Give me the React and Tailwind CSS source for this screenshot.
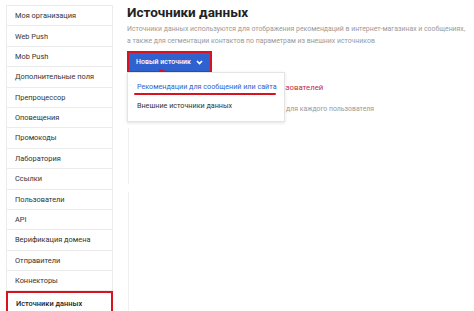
import React from 'react';

const menu = [
  'Моя организация',
  'Web Push',
  'Mob Push',
  'Дополнительные поля',
  'Препроцессор',
  'Оповещения',
  'Промокоды',
  'Лаборатория',
  'Ссылки',
  'Пользователи',
  'API',
  'Верификация домена',
  'Отправители',
  'Коннекторы',
];

const App = () => {
  return (
    <div
      className="w-[474px] h-[311px] overflow-hidden bg-white flex"
      style={{ fontFamily: 'Roboto, "Liberation Sans", Arial, sans-serif' }}
    >
      {/* Sidebar */}
      <div className="ml-[6px] mt-[5px] w-[107px] shrink-0 border-l border-r border-t border-[#ececec]">
        {menu.map((item) => (
          <div
            key={item}
            className="h-[20.4px] flex items-center pl-[8px] border-b border-[#ececec] text-[7.4px] text-[#333]"
          >
            {item}
          </div>
        ))}
        <div className="h-[24px] -mx-px flex items-center pl-[8px] border-2 border-[#d9121f] text-[7.4px] font-medium text-[#222]">
          Источники данных
        </div>
      </div>

      {/* Main */}
      <div className="relative flex-1 pl-[14px] pt-[4px]">
        <h1 className="text-[13.5px] font-bold text-[#222] leading-[16px]">Источники данных</h1>
        <p className="mt-[3px] text-[6.9px] leading-[12px] text-[#9a9a9a] whitespace-nowrap">
          Источники данных используются для отображения рекомендаций в интернет-магазинах и сообщениях,
          <br />
          а также для сегментации контактов по параметрам из внешних источников
        </p>

        <div className="mt-[4px] inline-flex border-2 border-[#d9121f]">
          <button className="h-[18px] px-[7px] bg-[#2f61cf] text-white text-[7px] font-medium flex items-center gap-[5px] whitespace-nowrap">
            Новый источник
            <svg width="7" height="5" viewBox="0 0 7 5" fill="none">
              <path d="M1 1l2.5 2.5L6 1" stroke="white" strokeWidth="1.6" />
            </svg>
          </button>
        </div>

        {/* content under dropdown */}
        <div className="mt-[9px] pl-[69px]">
          <div className="text-[7.8px] text-[#c4283f] leading-[12px] whitespace-nowrap">Рекомендации для пользователей</div>
          <div className="mt-[10px] text-[6.9px] text-[#9a9a9a] leading-[10px] pl-[28px] whitespace-nowrap">
            Подборки товаров для каждого пользователя
          </div>
        </div>
        <div className="mt-[14px] ml-[1px] h-[56px] border-l border-[#f0f0f0]" />
        <div className="mt-[8px] ml-[1px] h-[130px] border-l border-[#f0f0f0]" />

        {/* arrow */}
        <svg className="absolute left-[44px] top-[68px]" width="14" height="14" viewBox="0 0 14 14">
          <path d="M12 12L5 4" stroke="#d9121f" strokeWidth="2.2" />
          <path d="M2 1l7 2-5 4z" fill="#d9121f" />
        </svg>

        {/* dropdown */}
        <div className="absolute left-[14px] top-[72px] w-[158px] h-[50px] bg-white border border-[#e4e4e4] shadow-[0_1px_3px_rgba(0,0,0,0.12)]">
          <div className="pl-[9px] pt-[8px] text-[7.2px] text-[#2f61cf] leading-[11px] whitespace-nowrap">
            Рекомендации для сообщений или сайта
          </div>
          <div className="ml-[6px] mt-[1px] w-[142px] h-[2px] bg-[#d9121f] rounded-full" />
          <div className="pl-[9px] pt-[5px] text-[7.2px] text-[#333] leading-[11px] whitespace-nowrap">
            Внешние источники данных
          </div>
        </div>
      </div>
    </div>
  );
};

export default App;
